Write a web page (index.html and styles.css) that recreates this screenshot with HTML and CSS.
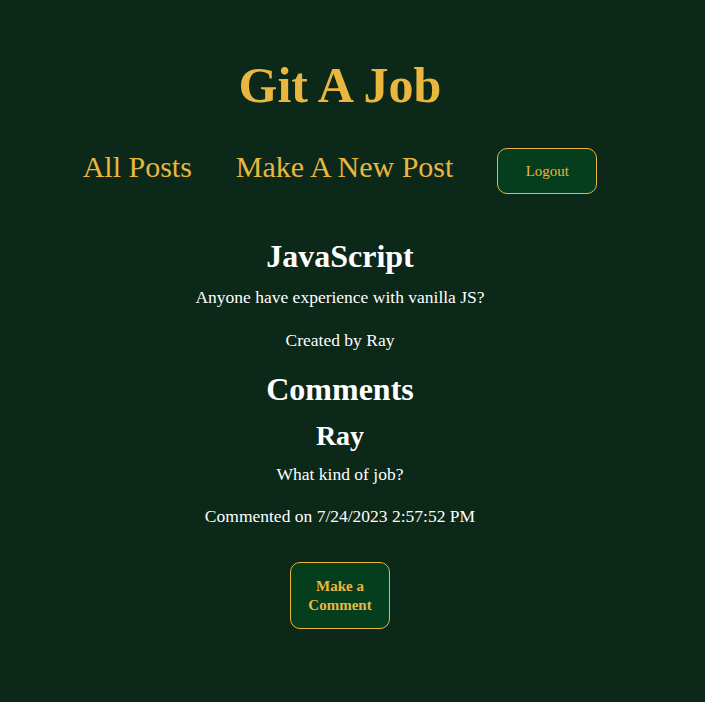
FILE: index.html
```html
<!DOCTYPE html>
<html>
<head>
<meta charset="utf-8">
<link rel="stylesheet" href="styles.css">
</head>
<body>
<div class="page">
  <h1 class="title">Git A Job</h1>
  <nav class="nav">
    <a class="nav-link" href="#">All Posts</a>
    <a class="nav-link" href="#">Make A New Post</a>
    <button class="btn btn-logout">Logout</button>
  </nav>
  <section class="post">
    <h1 class="post-title">JavaScript</h1>
    <p class="text post-body">Anyone have experience with vanilla JS?</p>
    <p class="text post-meta">Created by Ray</p>
  </section>
  <section class="comments">
    <h1 class="comments-title">Comments</h1>
    <div class="comment">
      <h2 class="comment-author">Ray</h2>
      <p class="text comment-body">What kind of job?</p>
      <p class="text comment-meta">Commented on 7/24/2023 2:57:52 PM</p>
    </div>
    <button class="btn btn-comment">Make a<br>Comment</button>
  </section>
</div>
</body>
</html>
```
FILE: styles.css
```css
html, body {
  margin: 0;
  padding: 0;
  background: #0b2819;
  height: 100%;
}
body {
  font-family: "Liberation Serif", "Times New Roman", serif;
  color: #ffffff;
}
.page {
  width: 680px;
  display: flex;
  flex-direction: column;
  align-items: center;
  text-align: center;
}
.post, .comments {
  display: flex;
  flex-direction: column;
  align-items: center;
}
.title {
  color: #e9b63f;
  font-size: 50px;
  font-weight: bold;
  margin: 56px 0 0;
  line-height: 58px;
}
.nav {
  display: flex;
  align-items: center;
  gap: 44px;
  margin-top: 26px;
}
.nav-link {
  color: #e9b63f;
  font-size: 30px;
  text-decoration: none;
  line-height: 36px;
}
.btn {
  font-family: "Liberation Serif", "Times New Roman", serif;
  background: #053e1c;
  color: #e9b63f;
  border: 1px solid #e9b63f;
  border-radius: 10px;
  width: 100px;
  cursor: pointer;
}
.btn-logout {
  height: 46px;
  font-size: 15px;
  margin-top: 8px;
}
.post-title, .comments-title {
  font-size: 32px;
  font-weight: bold;
  margin: 0;
  line-height: 37px;
}
.post-title {
  margin-top: 44px;
}
.text {
  font-size: 17.5px;
  line-height: 21px;
  margin: 0;
}
.post-body {
  margin-top: 12px;
}
.post-meta {
  margin-top: 22px;
}
.comments-title {
  margin-top: 20px;
}
.comment {
  display: flex;
  flex-direction: column;
  align-items: center;
}
.comment-author {
  font-size: 28px;
  font-weight: bold;
  margin: 12px 0 0;
  line-height: 32px;
}
.comment-body {
  margin-top: 12px;
}
.comment-meta {
  margin-top: 21px;
}
.btn-comment {
  height: 67px;
  font-size: 15px;
  font-weight: bold;
  line-height: 19px;
  margin-top: 35px;
}
```
